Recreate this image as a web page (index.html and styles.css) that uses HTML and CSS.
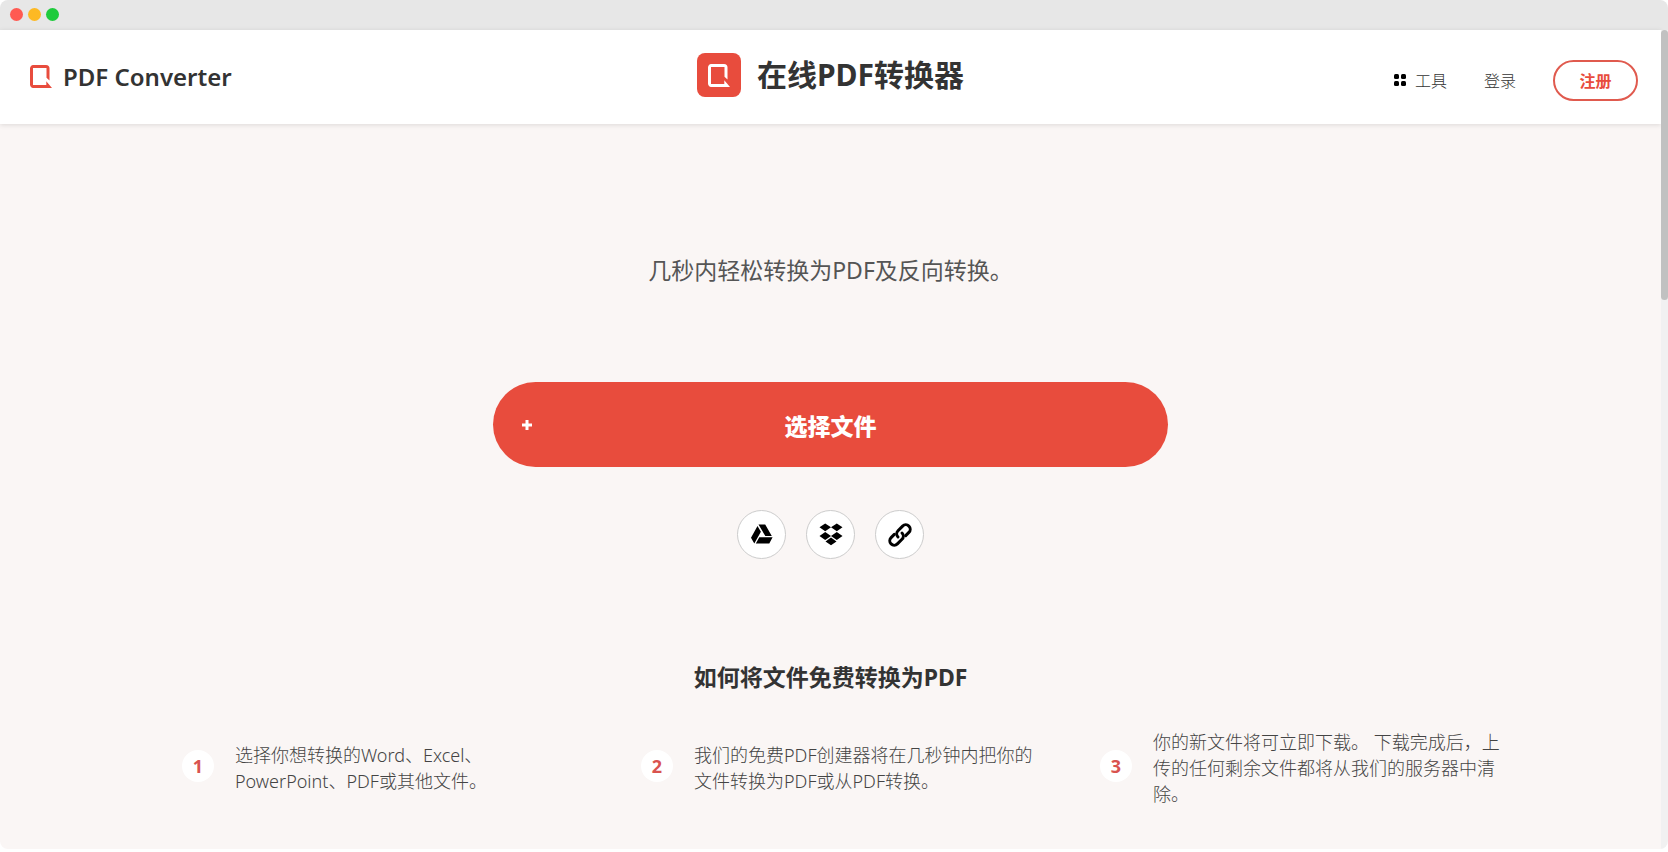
FILE: index.html
```html
<!DOCTYPE html>
<html lang="zh-CN">
<head>
    <meta charset="UTF-8">
    <meta name="viewport" content="width=device-width, initial-scale=1.0">
    <title>在线PDF转换器</title>
    <link rel="stylesheet" href="styles.css">
</head>
<body>
    <svg class="defs" aria-hidden="true">
        <symbol id="q-logo" viewBox="0 0 22 23">
            <path d="M4 0H16a3.500 3.500 0 0 1 3.500 3.500V15.500L16.500 12.800V3H3V20H16.300V16.200L22 23H4A3.500 3.500 0 0 1 0 19.500V3.500A3.500 3.500 0 0 1 4 0Z"/>
        </symbol>
    </svg>

    <div class="window">
        <div class="titlebar">
            <span class="dot red"></span>
            <span class="dot yellow"></span>
            <span class="dot green"></span>
        </div>

        <div class="viewport">
            <div class="page">
                <header class="header">
                    <a class="brand" href="#">
                        <svg class="brand-icon"><use href="#q-logo"/></svg>
                        PDF Converter
                    </a>
                    <div class="headline">
                        <span class="headline-icon"><svg><use href="#q-logo"/></svg></span>
                        <h1>在线PDF转换器</h1>
                    </div>
                    <nav class="nav">
                        <a class="tools" href="#">
                            <svg viewBox="0 0 12 12">
                                <rect width="5" height="5" rx="1.500"/>
                                <rect x="7" width="5" height="5" rx="1.500"/>
                                <rect y="7" width="5" height="5" rx="1.500"/>
                                <rect x="7" y="7" width="5" height="5" rx="1.500"/>
                            </svg>
                            工具
                        </a>
                        <a href="#">登录</a>
                        <button class="register" type="button">注册</button>
                    </nav>
                </header>

                <main>
                    <p class="subtitle">几秒内轻松转换为PDF及反向转换。</p>

                    <button class="choose" type="button">
                        <svg viewBox="0 0 12 12"><path d="M6 1V11M1 6H11"/></svg>
                        <span>选择文件</span>
                    </button>

                    <div class="sources">
                        <button type="button" aria-label="Google Drive">
                            <svg viewBox="0 0 24 24">
                                <path d="M8.500 1.500H15.200L21.800 13H15.300ZM7.500 3L10.900 8.800L4.300 20.500L1 14.700ZM9.300 14.300H22.600L19.300 20.500H5.800Z"/>
                            </svg>
                        </button>
                        <button type="button" aria-label="Dropbox">
                            <svg viewBox="0 0 24 24">
                                <path d="M6.200 .5L12 4.200L6.200 8.200L.5 4.200ZM17.800 .5L23.500 4.200L17.800 8.200L12 4.200ZM6.200 9L12 13L6.200 16.900L.5 13ZM17.800 9L23.500 13L17.800 16.900L12 13ZM12 14.600L17.500 18.400L12 22.300L6.500 18.400Z"/>
                            </svg>
                        </button>
                        <button type="button" aria-label="URL">
                            <svg class="link" viewBox="0 0 24 24">
                                <path d="M10 14a4.500 4.500 0 0 1 0-6.300L14.600 3.100A4.400 4.400 0 0 1 20.900 9.400L17.700 12.600"/>
                                <path d="M14 10a4.500 4.500 0 0 1 0 6.300L9.400 20.900A4.400 4.400 0 0 1 3.100 14.600L6.300 11.400"/>
                            </svg>
                        </button>
                    </div>

                    <h2>如何将文件免费转换为PDF</h2>

                    <div class="steps">
                        <div class="step">
                            <span class="number">1</span>
                            <p>选择你想转换的Word、Excel、PowerPoint、PDF或其他文件。</p>
                        </div>
                        <div class="step">
                            <span class="number">2</span>
                            <p>我们的免费PDF创建器将在几秒钟内把你的文件转换为PDF或从PDF转换。</p>
                        </div>
                        <div class="step">
                            <span class="number">3</span>
                            <p>你的新文件将可立即下载。 下载完成后，上传的任何剩余文件都将从我们的服务器中清除。</p>
                        </div>
                    </div>
                </main>
            </div>
            <div class="scrollbar"><div class="thumb"></div></div>
        </div>
    </div>
</body>
</html>
```
FILE: styles.css
```css
* {
    box-sizing: border-box;
}

body {
    margin: 0;
    background-color: #ffffff;
    color: #333333;
    font-family: "Noto Sans", "Noto Sans CJK SC", sans-serif;
}

h1, h2, p {
    margin: 0;
}

a {
    color: inherit;
    text-decoration: none;
}

button {
    font-family: inherit;
    cursor: pointer;
}

.defs {
    display: none;
}

.window {
    border-radius: 8px;
    overflow: hidden;
}

.titlebar {
    display: flex;
    align-items: center;
    gap: 5px;
    height: 30px;
    padding: 0 10px 2px;
    background-color: #e7e7e7;
}

.dot {
    width: 13px;
    height: 13px;
    border-radius: 50%;
}

.red {
    background-color: #ff5a52;
}

.yellow {
    background-color: #fdb924;
}

.green {
    background-color: #1ecb3c;
}

.viewport {
    display: flex;
}

.page {
    flex: 1;
    background-color: #faf6f5;
}

.scrollbar {
    width: 7px;
    background-color: #f1f1f1;
}

.thumb {
    height: 33%;
    border-radius: 4px;
    background-color: #c1c1c1;
}

/* header */
.header {
    display: grid;
    grid-template-columns: 1fr auto 1fr;
    align-items: center;
    height: 94px;
    padding: 0 23px;
    background-color: #ffffff;
    box-shadow: 0 1px 5px rgba(0, 0, 0, 0.12);
}

.brand {
    display: flex;
    align-items: center;
    gap: 11px;
    padding: 0 0 2px 7px;
    font-size: 24px;
    font-weight: 600;
}

.brand-icon {
    width: 22px;
    height: 23px;
    fill: #e84c3d;
}

.headline {
    display: flex;
    align-items: center;
    gap: 16px;
    padding-bottom: 4px;
}

.headline-icon {
    display: flex;
    align-items: center;
    justify-content: center;
    width: 44px;
    height: 44px;
    border-radius: 8px;
    background-color: #e84c3d;
}

.headline-icon svg {
    width: 22px;
    height: 23px;
    fill: #ffffff;
}

h1 {
    font-size: 30px;
    line-height: 44px;
}

.nav {
    display: flex;
    align-items: center;
    justify-content: flex-end;
    gap: 37px;
    padding-top: 6px;
    font-size: 16px;
    font-weight: 300;
    color: #333333;
}

.tools {
    display: flex;
    align-items: center;
    gap: 9px;
}

.tools svg {
    width: 12px;
    height: 12px;
    fill: #000000;
}

.register {
    width: 85px;
    height: 41px;
    border: 2px solid #e05a4e;
    border-radius: 21px;
    background-color: #ffffff;
    color: #e84c3d;
    font-size: 16px;
    font-weight: 700;
}

/* main */
main {
    display: flex;
    flex-direction: column;
    align-items: center;
    padding: 128px 0 42px;
}

.subtitle {
    font-size: 23px;
    line-height: 36px;
    color: #555555;
}

.choose {
    display: grid;
    grid-template-columns: 1fr auto 1fr;
    align-items: center;
    width: 90%;
    max-width: 675px;
    height: 85px;
    margin-top: 94px;
    padding: 0 28px;
    border: none;
    border-radius: 43px;
    background-color: #e84c3d;
    color: #ffffff;
    font-size: 23px;
    font-weight: 900;
}

.choose svg {
    width: 12px;
    height: 12px;
    fill: none;
    stroke: #ffffff;
    stroke-width: 3;
}

.sources {
    display: flex;
    gap: 20px;
    margin-top: 43px;
}

.sources button {
    display: flex;
    align-items: center;
    justify-content: center;
    width: 49px;
    height: 49px;
    padding: 0;
    border: 1px solid #cccccc;
    border-radius: 50%;
    background-color: #ffffff;
}

.sources svg {
    width: 24px;
    height: 24px;
}

.sources .link {
    fill: none;
    stroke: #000000;
    stroke-width: 3;
    stroke-linecap: round;
}

h2 {
    margin-top: 100px;
    font-size: 23px;
    line-height: 36px;
}

.steps {
    display: grid;
    grid-template-columns: repeat(3, 1fr);
    align-items: center;
    align-self: stretch;
    margin-top: 34px;
    padding: 0 142px;
}

.step {
    display: flex;
    align-items: center;
    gap: 21px;
    padding: 0 18px 0 40px;
}

.number {
    flex: none;
    width: 32px;
    height: 32px;
    margin-bottom: 4px;
    border-radius: 50%;
    background-color: #ffffff;
    color: #d9534f;
    font-size: 18px;
    line-height: 32px;
    font-weight: 700;
    text-align: center;
}

.step p {
    color: #444444;
    font-size: 18px;
    line-height: 26px;
    font-weight: 300;
}
```
